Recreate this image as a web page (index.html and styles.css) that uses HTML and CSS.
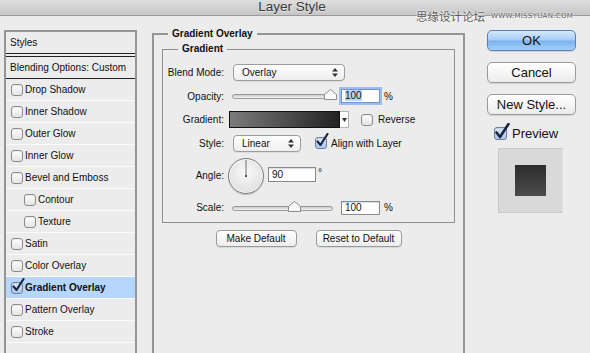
FILE: index.html
```html
<!DOCTYPE html>
<html lang="en">
<head>
    <meta charset="UTF-8">
    <title>Layer Style</title>
    <link rel="stylesheet" href="styles.css">
</head>
<body>
    <div class="titlebar">
        <span class="title">Layer Style</span>
        <div class="watermark">
            <span class="wm-cn">思缘设计论坛</span>
            <span class="wm-url">WWW.MISSYUAN.COM</span>
        </div>
    </div>

    <div class="main">
        <!-- Left: list of layer effects -->
        <div class="styles-list">
            <div class="list-head">Styles</div>
            <div class="list-blend">Blending Options: Custom</div>
            <div class="list-item"><span class="cb"></span>Drop Shadow</div>
            <div class="list-item"><span class="cb"></span>Inner Shadow</div>
            <div class="list-item"><span class="cb"></span>Outer Glow</div>
            <div class="list-item"><span class="cb"></span>Inner Glow</div>
            <div class="list-item"><span class="cb"></span>Bevel and Emboss</div>
            <div class="list-item sub"><span class="cb"></span>Contour</div>
            <div class="list-item sub"><span class="cb"></span>Texture</div>
            <div class="list-item"><span class="cb"></span>Satin</div>
            <div class="list-item"><span class="cb"></span>Color Overlay</div>
            <div class="list-item selected">
                <span class="cb checked"><svg class="tick" width="14" height="15" viewBox="0 0 14 15"><path d="M2.5 8.5 L5.5 12 L12.5 1" fill="none" stroke="#1c2740" stroke-width="2.2" stroke-linecap="round" stroke-linejoin="round"/></svg></span>Gradient Overlay
            </div>
            <div class="list-item"><span class="cb"></span>Pattern Overlay</div>
            <div class="list-item"><span class="cb"></span>Stroke</div>
            <div class="list-item"></div>
        </div>

        <!-- Middle: effect settings -->
        <fieldset class="group outer">
            <legend>Gradient Overlay</legend>
            <fieldset class="group inner">
                <legend>Gradient</legend>
                <div class="form">
                    <span class="label">Blend Mode:</span>
                    <div class="ctrl">
                        <div class="select blend">Overlay
                            <svg class="arrows" width="6" height="9" viewBox="0 0 6 9"><path d="M0 3.5 L3 0 L6 3.5 Z M0 5.5 L3 9 L6 5.5 Z" fill="#333"/></svg>
                        </div>
                    </div>

                    <span class="label">Opacity:</span>
                    <div class="ctrl">
                        <div class="slider">
                            <div class="track"></div>
                            <svg class="thumb" style="left: 92px" width="13" height="11" viewBox="0 0 13 11"><path d="M0.5 10.5 V5.5 L6.5 0.5 L12.5 5.5 V10.5 Z" fill="#fafafa" stroke="#8a8a8a"/></svg>
                        </div>
                        <div class="num focus"><span class="sel">100</span></div>
                        <span class="unit">%</span>
                    </div>

                    <span class="label">Gradient:</span>
                    <div class="ctrl">
                        <div class="gradient-pick">
                            <div class="swatch"></div>
                            <div class="drop"><svg width="5" height="4" viewBox="0 0 5 4"><path d="M0 0 H5 L2.5 4 Z" fill="#333"/></svg></div>
                        </div>
                        <span class="cb reverse-cb"></span>
                        <span class="check-text">Reverse</span>
                    </div>

                    <span class="label">Style:</span>
                    <div class="ctrl">
                        <div class="select style-sel">Linear
                            <svg class="arrows" width="6" height="9" viewBox="0 0 6 9"><path d="M0 3.5 L3 0 L6 3.5 Z M0 5.5 L3 9 L6 5.5 Z" fill="#333"/></svg>
                        </div>
                        <span class="cb checked align-cb"><svg class="tick" width="14" height="15" viewBox="0 0 14 15"><path d="M2.5 8.5 L5.5 12 L12.5 1" fill="none" stroke="#1c2740" stroke-width="2.2" stroke-linecap="round" stroke-linejoin="round"/></svg></span>
                        <span class="check-text">Align with Layer</span>
                    </div>

                    <span class="label">Angle:</span>
                    <div class="ctrl">
                        <div class="dial">
                            <svg width="36" height="36" viewBox="0 0 36 36"><line x1="18" y1="18" x2="18" y2="2" stroke="#6a6a6a" stroke-width="1"/><rect x="17" y="17" width="2" height="2" fill="#555"/></svg>
                        </div>
                        <div class="num angle">90</div>
                        <span class="unit deg">°</span>
                    </div>

                    <span class="label">Scale:</span>
                    <div class="ctrl">
                        <div class="slider">
                            <div class="track"></div>
                            <svg class="thumb" style="left: 56px" width="13" height="11" viewBox="0 0 13 11"><path d="M0.5 10.5 V5.5 L6.5 0.5 L12.5 5.5 V10.5 Z" fill="#fafafa" stroke="#8a8a8a"/></svg>
                        </div>
                        <div class="num">100</div>
                        <span class="unit">%</span>
                    </div>
                </div>
            </fieldset>
            <div class="defaults">
                <button class="small-btn make">Make Default</button>
                <button class="small-btn reset">Reset to Default</button>
            </div>
        </fieldset>

        <!-- Right: dialog actions -->
        <div class="actions">
            <button class="btn primary">OK</button>
            <button class="btn">Cancel</button>
            <button class="btn">New Style...</button>
            <div class="preview-check">
                <span class="cb checked big"><svg class="tick" width="16" height="17" viewBox="0 0 16 17"><path d="M2.5 9.5 L6 14 L14.5 1" fill="none" stroke="#1c2740" stroke-width="2.6" stroke-linecap="round" stroke-linejoin="round"/></svg></span>
                <span>Preview</span>
            </div>
            <div class="preview-box"><div class="preview-swatch"></div></div>
        </div>
    </div>
</body>
</html>
```

FILE: styles.css
```css
body {
    margin: 0;
    width: 590px;
    height: 353px;
    overflow: hidden;
    background-color: #ececec;
    font-family: "Liberation Sans", Arial, sans-serif;
    font-size: 10px;
    color: #111;
}

.titlebar {
    position: relative;
    height: 15px;
    border-bottom: 1px solid #9a9a9a;
    background: linear-gradient(#dedede, #c6c6c6);
    text-align: center;
}

.title {
    display: inline-block;
    margin-right: 6px;
    font-size: 13.5px;
    line-height: 14px;
    color: #3a3a3a;
    text-shadow: 0 1px 0 rgba(255, 255, 255, 0.5);
}

.watermark {
    position: absolute;
    top: 9px;
    left: 416px;
    display: flex;
    align-items: center;
    gap: 6px;
    color: #5a5a5a;
    text-shadow: 0 0 2px #fff, 0 0 2px #fff;
}

.wm-cn {
    font-family: "Noto Sans CJK SC", sans-serif;
    font-size: 11.5px;
    line-height: 14px;
}

.wm-url {
    font-family: "DejaVu Sans", sans-serif;
    font-size: 7px;
    letter-spacing: 0.3px;
}

.main {
    display: flex;
    align-items: flex-start;
}

/* ---- styles list ---- */

.styles-list {
    margin: 14px 0 0 4px;
    width: 133px;
    height: 330px;
    box-sizing: border-box;
    border: 2px solid #959595;
    border-bottom: none;
    background-color: #ececec;
}

.list-head {
    height: 21px;
    line-height: 21px;
    padding-left: 4px;
    border-bottom: 4px double #222;
}

.list-blend {
    height: 21px;
    line-height: 21px;
    padding-left: 4px;
    border-bottom: 1px solid #222;
}

.list-item {
    display: flex;
    align-items: center;
    gap: 2px;
    height: 21px;
    padding-left: 5px;
    border-bottom: 1px solid #fafafa;
}

.list-item.sub {
    padding-left: 18px;
}

.list-item.selected {
    background-color: #b7d6fd;
    font-weight: bold;
}

/* ---- checkbox ---- */

.cb {
    position: relative;
    display: inline-block;
    flex: none;
    width: 10px;
    height: 10px;
    border: 1px solid #8c8c8c;
    border-radius: 3px;
    background: linear-gradient(#ffffff, #e4e4e4);
    box-shadow: inset 0 1px 1px rgba(0, 0, 0, 0.08);
}

.cb.checked {
    border-color: #6c7f9c;
    background: linear-gradient(#dce9fb, #a9c6ee);
}

.cb .tick {
    position: absolute;
    left: -1px;
    top: -5px;
}

.cb.big {
    width: 11px;
    height: 11px;
}

/* ---- fieldsets ---- */

.group {
    margin: 0;
    padding: 0;
    min-width: 0;
}

.group legend {
    padding: 0 4px;
    font-weight: bold;
    line-height: 12px;
}

.outer {
    margin: 12px 0 0 15px;
    width: 313px;
    height: 340px;
    box-sizing: border-box;
    padding: 0 8px;
    border: 2px solid #959595;
}

.outer > legend {
    margin-left: 6px;
}

.inner {
    margin-top: 3px;
    padding: 0 0 3px 0;
    border: 1px solid #8e8e8e;
}

.inner > legend {
    margin-left: 15px;
}

.form {
    display: grid;
    grid-template-columns: 61px 1fr;
    grid-template-rows: 24px 24px 23px 24px 41px 23px;
    column-gap: 8px;
    padding-top: 5px;
}

.label {
    align-self: center;
    text-align: right;
}

.ctrl {
    display: flex;
    align-items: center;
}

.select {
    position: relative;
    box-sizing: border-box;
    height: 17px;
    line-height: 15px;
    padding-left: 8px;
    border: 1px solid #9c9c9c;
    border-radius: 4px;
    background: linear-gradient(#ffffff, #eeeeee);
    box-shadow: 0 1px 0 rgba(0, 0, 0, 0.06);
}

.select .arrows {
    position: absolute;
    right: 6px;
    top: 3px;
}

.blend {
    margin-left: 1px;
    width: 112px;
}

.style-sel {
    margin-left: 1px;
    width: 68px;
}

.slider {
    position: relative;
    width: 101px;
    height: 12px;
}

.track {
    position: absolute;
    left: 0;
    right: 0;
    top: 4px;
    height: 3px;
    border: 1px solid #9a9a9a;
    border-radius: 3px;
    background: linear-gradient(#c8c8c8, #f4f4f4);
}

.thumb {
    position: absolute;
    top: -1px;
}

.num {
    box-sizing: border-box;
    margin-left: 8px;
    width: 39px;
    height: 14px;
    line-height: 12px;
    padding-left: 3px;
    border: 1px solid #8a8a8a;
    background-color: #fff;
    box-shadow: inset 0 1px 1px rgba(0, 0, 0, 0.15);
}

.num.focus {
    border-color: #6e95cf;
    box-shadow: 0 0 0 2px #9dbdea;
}

.sel {
    background-color: #b7d6fd;
}

.unit {
    margin-left: 4px;
}

.deg {
    margin-left: 2px;
    align-self: flex-start;
    margin-top: 12px;
}

.gradient-pick {
    display: flex;
    margin-left: -3px;
    height: 17px;
}

.swatch {
    box-sizing: border-box;
    width: 111px;
    border: 1px solid #111;
    background: linear-gradient(to right, #7b7b7b, #222222);
}

.drop {
    box-sizing: border-box;
    width: 9px;
    border: 1px solid #b5b5b5;
    border-left: none;
    background-color: #fff;
    display: flex;
    align-items: center;
    justify-content: center;
}

.reverse-cb {
    margin-left: 12px;
}

.align-cb {
    margin-left: 14px;
}

.check-text {
    margin-left: 5px;
}

.align-cb + .check-text {
    margin-left: 4px;
}

.dial {
    margin-left: -4px;
    width: 36px;
    height: 36px;
    box-sizing: border-box;
    border: 1px solid #7d7d7d;
    border-radius: 50%;
    background: radial-gradient(circle at 50% 40%, #fafafa, #e2e2e2 70%, #cfcfcf);
    box-shadow: inset 0 0 0 1px #f7f7f7, 0 1px 1px rgba(0, 0, 0, 0.2);
}

.dial svg {
    display: block;
    margin: -1px;
}

.angle {
    margin-left: 4px;
    width: 48px;
    height: 15px;
    line-height: 13px;
    align-self: flex-start;
    margin-top: 12px;
}

.defaults {
    display: flex;
    justify-content: center;
    gap: 19px;
    margin-top: 7px;
}

.small-btn {
    box-sizing: border-box;
    height: 17px;
    padding: 0;
    font-family: "Liberation Sans", Arial, sans-serif;
    font-size: 10px;
    color: #111;
    border: 1px solid #9a9a9a;
    border-radius: 4px;
    background: linear-gradient(#ffffff, #ededed);
    box-shadow: 0 1px 0 rgba(0, 0, 0, 0.08);
}

.make {
    width: 81px;
}

.reset {
    width: 86px;
}

/* ---- right column ---- */

.actions {
    display: flex;
    flex-direction: column;
    margin: 14px 0 0 22px;
    width: 89px;
}

.btn {
    box-sizing: border-box;
    height: 21px;
    margin-bottom: 11px;
    padding: 0;
    font-family: "Liberation Sans", Arial, sans-serif;
    font-size: 13px;
    color: #111;
    border: 1px solid #9a9a9a;
    border-radius: 5px;
    background: linear-gradient(#ffffff, #ececec);
    box-shadow: 0 1px 1px rgba(0, 0, 0, 0.12);
}

.btn.primary {
    border-color: #5b7fb4;
    background: linear-gradient(#d6e8fc 0%, #a9cdf6 45%, #7db3ef 55%, #a5d0fb 100%);
}

.preview-check {
    display: flex;
    align-items: center;
    gap: 5px;
    margin: 0 0 0 7px;
    height: 14px;
    font-size: 13px;
}

.preview-box {
    margin: 8px 0 0 11px;
    width: 65px;
    height: 65px;
    box-sizing: border-box;
    border: 1px solid #c9c9c9;
    border-right-color: #e2e2e2;
    background-color: #d9d9d9;
    display: flex;
    align-items: center;
    justify-content: center;
}

.preview-swatch {
    width: 31px;
    height: 31px;
    background: linear-gradient(#2c2c2c, #4c4c4c);
}
```
